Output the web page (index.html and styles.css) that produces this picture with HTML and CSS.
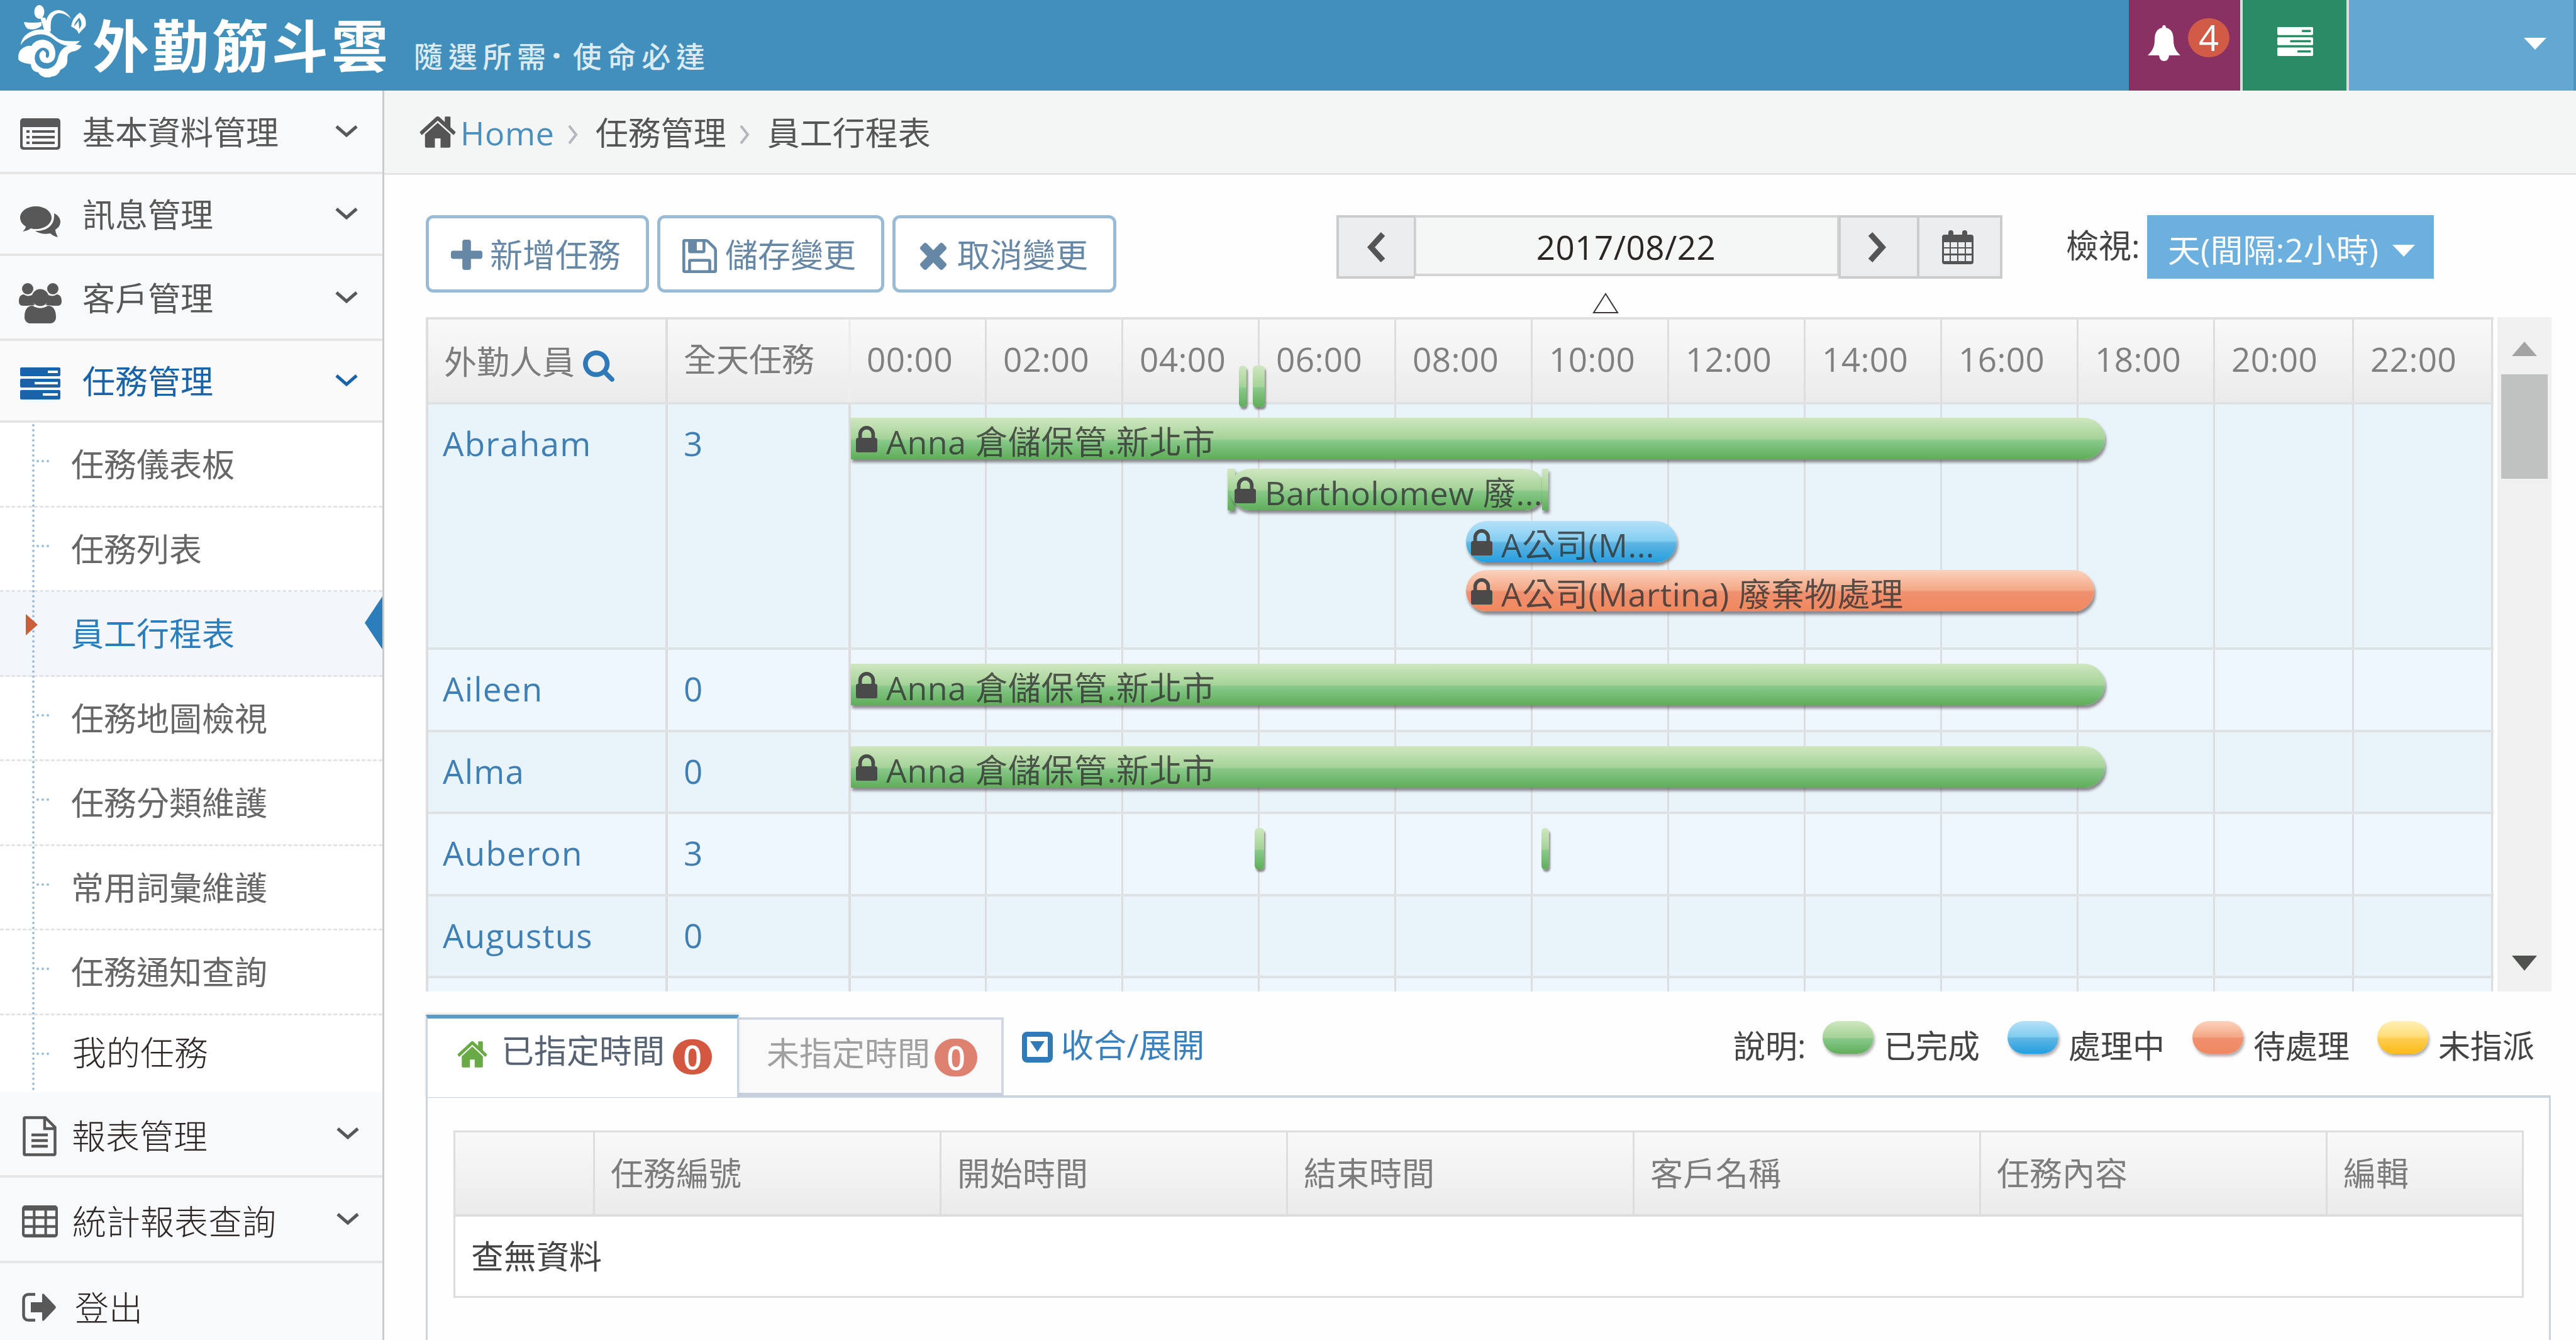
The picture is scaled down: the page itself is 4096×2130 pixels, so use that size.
FILE: index.html
```html
<!DOCTYPE html>
<html lang="zh-Hant">
<head>
<meta charset="utf-8">
<title>外勤筋斗雲 - 員工行程表</title>
<link rel="stylesheet" href="styles.css">
</head>
<body>
<svg class="sprite" width="0" height="0" aria-hidden="true">
  <symbol id="i-home" viewBox="72 250 1648 1290" preserveAspectRatio="none"><path d="M1472 992v480q0 26-19 45t-45 19h-384v-384h-256v384h-384q-26 0-45-19t-19-45v-480q0-1 .5-3t.5-3l575-474 575 474q1 2 1 6zm223-69l-62 74q-8 9-21 11h-3q-13 0-21-7l-692-577-692 577q-12 8-24 7-13-2-21-11l-62-74q-8-10-7-23.5t11-21.5l719-599q32-26 76-26t76 26l244 204v-195q0-14 9-23t23-9h192q14 0 23 9t9 23v408l219 182q10 8 11 21.5t-7 23.5z"/></symbol>
  <symbol id="i-plus" viewBox="192 128 1408 1408" preserveAspectRatio="none"><path d="M1600 736v192q0 40-28 68t-68 28h-416v416q0 40-28 68t-68 28h-192q-40 0-68-28t-28-68v-416h-416q-40 0-68-28t-28-68v-192q0-40 28-68t68-28h416v-416q0-40 28-68t68-28h192q40 0 68 28t28 68v416h416q40 0 68 28t28 68z"/></symbol>
  <symbol id="i-save" viewBox="128 128 1536 1536" preserveAspectRatio="none"><path d="M512 1536h768v-384h-768v384zm896 0h128v-896q0-14-10-38.5t-20-34.5l-281-281q-10-10-34-20t-39-10v416q0 40-28 68t-68 28h-576q-40 0-68-28t-28-68v-416h-128v1280h128v-416q0-40 28-68t68-28h832q40 0 68 28t28 68v416zm-384-928v-320q0-13-9.5-22.5t-22.5-9.5h-192q-13 0-22.5 9.5t-9.5 22.5v320q0 13 9.5 22.5t22.5 9.5h192q13 0 22.5-9.5t9.5-22.5zm640 32v928q0 40-28 68t-68 28h-1344q-40 0-68-28t-28-68v-1344q0-40 28-68t68-28h928q40 0 88 20t76 48l280 280q28 28 48 76t20 88z"/></symbol>
  <symbol id="i-times" viewBox="302 366 1188 1188" preserveAspectRatio="none"><path d="M1490 1322q0 40-28 68l-136 136q-28 28-68 28t-68-28l-294-294-294 294q-28 28-68 28t-68-28l-136-136q-28-28-28-68t28-68l294-294-294-294q-28-28-28-68t28-68l136-136q28-28 68-28t68 28l294 294 294-294q28-28 68-28t68 28l136 136q28 28 28 68t-28 68l-294 294 294 294q28 28 28 68z"/></symbol>
  <symbol id="i-search" viewBox="64 128 1664 1664"><path d="M1216 832q0-185-131.5-316.5t-316.5-131.5-316.5 131.5-131.5 316.5 131.5 316.5 316.5 131.5 316.5-131.5 131.5-316.5zm512 832q0 52-38 90t-90 38q-54 0-90-38l-343-342q-179 124-399 124-143 0-273.5-55.5t-225-150-150-225-55.5-273.5 55.5-273.5 150-225 225-150 273.5-55.5 273.5 55.5 225 150 150 225 55.5 273.5q0 220-124 399l343 343q37 37 37 90z"/></symbol>
  <symbol id="i-lock" viewBox="320 128 1152 1408" preserveAspectRatio="none"><path d="M640 768h512v-192q0-106-75-181t-181-75-181 75-75 181v192zm832 96v576q0 40-28 68t-68 28h-960q-40 0-68-28t-28-68v-576q0-40 28-68t68-28h32v-192q0-184 132-316t316-132 316 132 132 316v192h32q40 0 68 28t28 68z"/></symbol>
  <symbol id="i-down" viewBox="0 0 38 22"><path d="M3 3l16 14 16-14" fill="none" stroke="currentColor" stroke-width="5"/></symbol>
  <symbol id="i-list" viewBox="0 0 64 50"><path fill-rule="evenodd" d="M5 0h54a5 5 0 0 1 5 5v40a5 5 0 0 1-5 5H5a5 5 0 0 1-5-5V5a5 5 0 0 1 5-5zM4 14v29a3 3 0 0 0 3 3h50a3 3 0 0 0 3-3V14zM10 19h5v4h-5zM19 19h36v4H19zM10 28h5v4h-5zM19 28h36v4H19zM10 37h5v4h-5zM19 37h36v4H19z"/></symbol>
  <symbol id="i-comments" viewBox="0 0 64 50"><path d="M25 0c14 0 25 8 25 18S39 36 25 36c-3 0-5 0-8-1-4 3-8 4-13 5 3-3 5-5 5-8C4 29 0 24 0 18 0 8 11 0 25 0z"/><path d="M54 11c6 3 10 8 10 13 0 6-3 10-8 13 0 4 2 8 4 12-5-1-9-3-12-6-9 2-18 0-24-4 17 1 32-8 30-28z"/></symbol>
  <symbol id="i-users" viewBox="0 0 68 64"><circle cx="14" cy="9" r="9"/><circle cx="54" cy="9" r="9"/><path d="M8 18c4 3 8 3 13 1 0 6 2 11 4 16-9 1-15 1-19 1-4 0-6-3-6-7 0-6 2-11 8-11zM60 18c-4 3-8 3-13 1 0 6-2 11-4 16 9 1 15 1 19 1 4 0 6-3 6-7 0-6-2-11-8-11z"/><circle cx="34" cy="23" r="13.500"/><path d="M22 36c8 5 16 5 24 0 9 0 13 7 13 18 0 6-4 10-9 10H18c-5 0-9-4-9-10 0-11 4-18 13-18z"/></symbol>
  <symbol id="i-tasks" viewBox="0 0 64 51" preserveAspectRatio="none"><path fill-rule="evenodd" d="M2 0h60a2 2 0 0 1 2 2v10a2 2 0 0 1-2 2H2a2 2 0 0 1-2-2V2a2 2 0 0 1 2-2zM44 5v4h16V5zM2 18h60a2 2 0 0 1 2 2v10a2 2 0 0 1-2 2H2a2 2 0 0 1-2-2V20a2 2 0 0 1 2-2zM23 23v4h37v-4zM2 36h60a2 2 0 0 1 2 2v11a2 2 0 0 1-2 2H2a2 2 0 0 1-2-2V38a2 2 0 0 1 2-2zM36 41v4h24v-4z"/></symbol>
  <symbol id="i-file" viewBox="0 0 54 64"><path d="M2.500 4a1.500 1.500 0 0 1 1.500-1.500h32L51.500 18v42a1.500 1.500 0 0 1-1.500 1.500H4A1.500 1.500 0 0 1 2.500 60zM35 3v17h16M14 30h26M14 39h26M14 48h26" fill="none" stroke="currentColor" stroke-width="4.500"/></symbol>
  <symbol id="i-table" viewBox="0 0 56 50"><path fill-rule="evenodd" d="M5 0h46a5 5 0 0 1 5 5v40a5 5 0 0 1-5 5H5a5 5 0 0 1-5-5V5a5 5 0 0 1 5-5zM4 8v9h13V8zM21 8v9h14V8zM39 8v9h13V8zM4 21v10h13V21zM21 21v10h14V21zM39 21v10h13V21zM4 35v10h13V35zM21 35v10h14V35zM39 35v10h13V35z"/></symbol>
  <symbol id="i-out" viewBox="0 0 54 46"><path d="M21 2.500H10A7.500 7.500 0 0 0 2.500 10v26a7.500 7.500 0 0 0 7.500 7.500h11" fill="none" stroke="currentColor" stroke-width="4.500"/><path d="M14 15h18V3q0-3 3-1l18 19q1.500 2 0 4L35 44q-3 2-3-1V31H14z"/></symbol>
  <symbol id="i-bell" viewBox="0 0 52 57" preserveAspectRatio="none"><path d="M26 0q3 0 3 4c9 2 12 9 12 20 0 12 5 18 11 24H0c6-6 11-12 11-24C11 13 14 6 23 4q0-4 3-4zM18 48h16q-1 9-8 9t-8-9z"/></symbol>
  <symbol id="i-cal" viewBox="0 0 50 54"><path fill-rule="evenodd" d="M4 7h6V4q0-4 4-4t4 4v3h14V4q0-4 4-4t4 4v3h6q4 0 4 4v39q0 4-4 4H4q-4 0-4-4V11q0-4 4-4zM3 19v8h9v-8zM14 19v8h10v-8zM26 19v8h10v-8zM38 19v8h9v-8zM3 29v8h9v-8zM14 29v8h10v-8zM26 29v8h10v-8zM38 29v8h9v-8zM3 40v9h9v-9zM14 40v9h10v-9zM26 40v9h10v-9zM38 40v9h9v-9z"/></symbol>
  <symbol id="i-prev" viewBox="0 0 32 50"><path d="M26 4L7 25l19 21" fill="none" stroke="currentColor" stroke-width="9"/></symbol>
  <symbol id="i-next" viewBox="0 0 32 50"><path d="M6 4l19 21L6 46" fill="none" stroke="currentColor" stroke-width="9"/></symbol>
  <symbol id="i-crumb" viewBox="0 0 18 34"><path d="M3 3l11 14L3 31" fill="none" stroke="currentColor" stroke-width="4"/></symbol>
  <symbol id="i-toggle" viewBox="0 0 49 49"><path fill-rule="evenodd" d="M8 0h33a8 8 0 0 1 8 8v33a8 8 0 0 1-8 8H8a8 8 0 0 1-8-8V8a8 8 0 0 1 8-8zM8 8v32h33V8zM13 15h23L24.500 32z"/></symbol>
</svg>

<header class="navbar">
  <a class="brand">
    <svg class="brand-mark" viewBox="0 0 112 115">
      <ellipse cx="34.500" cy="11" rx="8" ry="11"/>
      <path d="M36 20h8l8 24 13 10q10 5 34 3-6 8-18 8-12-1-24-11Q42 42 24 49 9 55 5 64 6 50 20 43q10-5 22-4z"/>
      <path d="M10 27q14 2 28 0v6q-10 8-21 5-5-2-7-11z"/>
      <path d="M46 40C42 20 52 8 66 8q12 1 19 14-10-10-20-9Q50 16 53 42z"/>
      <path fill-rule="evenodd" d="M99 12q12 8 9 22l-11 12q0-6-12-12 2-14 14-22zm-1 8q-8 8-8 14l7-9 1 13q7-8 0-18z"/>
      <path d="M1 84q0-14 12-18 4-2 9-1 6-10 18-10 18 2 20 20 1 14-10 17-12 2-15-8-2-8 5-12 6 2 5 7-1 5 3 5 4-4 1-12-8-8-16-1-9 9-4 21 7 11 20 9 12-3 15-16 4-18 19-21 10-3 19 1-5 8-15 9-8 2-8 10 2 14-11 19-3 10-15 11-5 4-12 0-7-3-8-7-11-1-12-13Q0 91 1 84z"/>
    </svg>
    <span class="brand-name">外勤筋斗雲</span>
    <span class="brand-tag"><span>隨選所需</span><b>·</b><span>使命必達</span></span>
  </a>
  <nav class="nav-right">
    <a class="nav-bell"><svg><use href="#i-bell"/></svg><span class="count">4</span></a>
    <a class="nav-tasks"><svg><use href="#i-tasks"/></svg></a>
    <a class="nav-user"><i class="caret"></i></a>
  </nav>
</header>

<div class="container">
  <aside class="sidebar">
    <a class="item h132"><svg class="ic list"><use href="#i-list"/></svg><span>基本資料管理</span><svg class="down"><use href="#i-down"/></svg></a>
    <a class="item h130"><svg class="ic comments"><use href="#i-comments"/></svg><span>訊息管理</span><svg class="down"><use href="#i-down"/></svg></a>
    <a class="item h135"><svg class="ic users"><use href="#i-users"/></svg><span>客戶管理</span><svg class="down"><use href="#i-down"/></svg></a>
    <a class="item h130 open"><svg class="ic tasks"><use href="#i-tasks"/></svg><span>任務管理</span><svg class="down"><use href="#i-down"/></svg></a>
    <div class="submenu">
      <a class="sub">任務儀表板</a>
      <a class="sub">任務列表</a>
      <a class="sub active">員工行程表</a>
      <a class="sub">任務地圖檢視</a>
      <a class="sub">任務分類維護</a>
      <a class="sub">常用詞彙維護</a>
      <a class="sub">任務通知查詢</a>
      <a class="sub mine">我的任務</a>
    </div>
    <a class="item late"><svg class="ic file"><use href="#i-file"/></svg><span>報表管理</span><svg class="down"><use href="#i-down"/></svg></a>
    <a class="item late"><svg class="ic table"><use href="#i-table"/></svg><span>統計報表查詢</span><svg class="down"><use href="#i-down"/></svg></a>
    <a class="item late logout"><svg class="ic out"><use href="#i-out"/></svg><span>登出</span></a>
  </aside>

  <main class="content">
    <div class="breadcrumb">
      <svg class="bhome"><use href="#i-home"/></svg><a>Home</a>
      <svg class="sep"><use href="#i-crumb"/></svg><span>任務管理</span>
      <svg class="sep"><use href="#i-crumb"/></svg><span>員工行程表</span>
    </div>

    <div class="toolbar">
      <button class="btn b1"><svg class="plus"><use href="#i-plus"/></svg>新增任務</button>
      <button class="btn b2"><svg class="save"><use href="#i-save"/></svg>儲存變更</button>
      <button class="btn b3"><svg class="times"><use href="#i-times"/></svg>取消變更</button>
      <div class="datebox">
        <button class="dbtn prev"><svg><use href="#i-prev"/></svg></button>
        <div class="date">2017/08/22</div>
        <button class="dbtn next"><svg><use href="#i-next"/></svg></button>
        <button class="dbtn cal"><svg><use href="#i-cal"/></svg></button>
        <svg class="pointer" viewBox="0 0 42 34"><path d="M21 2L40 32H2z" fill="#fff" stroke="#3a3534" stroke-width="2"/></svg>
      </div>
      <span class="view-label">檢視:</span>
      <button class="view">天(間隔:2小時)<i class="caret"></i></button>
    </div>

    <div class="schedule">
      <div class="grid">
        <div class="row head">
          <div class="c-name">外勤人員<svg class="search"><use href="#i-search"/></svg></div>
          <div class="c-all">全天任務</div>
          <div class="lane"><i>00:00</i><i>02:00</i><i>04:00</i><i>06:00</i><i>08:00</i><i>10:00</i><i>12:00</i><i>14:00</i><i>16:00</i><i>18:00</i><i>20:00</i><i>22:00</i>
            <b class="bar green tick" style="left:618px;top:73px;width:12px"></b>
            <b class="bar green tick" style="left:640px;top:73px;width:19px"></b>
          </div>
        </div>
        <div class="row tall">
          <div class="c-name">Abraham</div><div class="c-all">3</div>
          <div class="lane"><i></i><i></i><i></i><i></i><i></i><i></i><i></i><i></i><i></i><i></i><i></i><i></i>
            <b class="bar green from-start" style="left:1px;top:21px;width:1994px"><svg><use href="#i-lock"/></svg>Anna 倉儲保管.新北市</b>
            <b class="bar green edge" style="left:600px;top:102px;width:12px"></b>
            <b class="bar green" style="left:603px;top:102px;width:502px"><svg><use href="#i-lock"/></svg>Bartholomew 廢...</b>
            <b class="bar green edge" style="left:1100px;top:102px;width:10px"></b>
            <b class="bar blue" style="left:979px;top:185px;width:335px"><svg><use href="#i-lock"/></svg>A公司(M...</b>
            <b class="bar orange" style="left:979px;top:263px;width:999px"><svg><use href="#i-lock"/></svg>A公司(Martina) 廢棄物處理</b>
          </div>
        </div>
        <div class="row alt">
          <div class="c-name">Aileen</div><div class="c-all">0</div>
          <div class="lane"><i></i><i></i><i></i><i></i><i></i><i></i><i></i><i></i><i></i><i></i><i></i><i></i>
            <b class="bar green from-start" style="left:1px;top:22px;width:1994px"><svg><use href="#i-lock"/></svg>Anna 倉儲保管.新北市</b>
          </div>
        </div>
        <div class="row">
          <div class="c-name">Alma</div><div class="c-all">0</div>
          <div class="lane"><i></i><i></i><i></i><i></i><i></i><i></i><i></i><i></i><i></i><i></i><i></i><i></i>
            <b class="bar green from-start" style="left:1px;top:22px;width:1994px"><svg><use href="#i-lock"/></svg>Anna 倉儲保管.新北市</b>
          </div>
        </div>
        <div class="row alt">
          <div class="c-name">Auberon</div><div class="c-all">3</div>
          <div class="lane"><i></i><i></i><i></i><i></i><i></i><i></i><i></i><i></i><i></i><i></i><i></i><i></i>
            <b class="bar green tick" style="left:643px;top:22px;width:15px"></b>
            <b class="bar green tick" style="left:1099px;top:22px;width:12px"></b>
          </div>
        </div>
        <div class="row">
          <div class="c-name">Augustus</div><div class="c-all">0</div>
          <div class="lane"><i></i><i></i><i></i><i></i><i></i><i></i><i></i><i></i><i></i><i></i><i></i><i></i></div>
        </div>
        <div class="row alt last">
          <div class="c-name"></div><div class="c-all"></div>
          <div class="lane"><i></i><i></i><i></i><i></i><i></i><i></i><i></i><i></i><i></i><i></i><i></i><i></i></div>
        </div>
      </div>
      <div class="scroll"><span class="up"></span><span class="thumb"></span><span class="dn"></span></div>
    </div>

    <div class="tabs">
      <a class="tab on"><svg><use href="#i-home"/></svg>已指定時間<span class="badge">0</span></a>
      <a class="tab off">未指定時間<span class="badge">0</span></a>
      <a class="toggle"><svg><use href="#i-toggle"/></svg>收合/展開</a>
      <div class="legend">
        <span class="lab">說明:</span>
        <b class="pill green"></b><span class="w">已完成</span>
        <b class="pill blue"></b><span class="w">處理中</span>
        <b class="pill orange"></b><span class="w">待處理</span>
        <b class="pill yellow"></b><span class="w">未指派</span>
      </div>
    </div>

    <section class="panel">
      <div class="tbl">
        <div class="thead"><span></span><span>任務編號</span><span>開始時間</span><span>結束時間</span><span>客戶名稱</span><span>任務內容</span><span>編輯</span></div>
        <div class="empty">查無資料</div>
      </div>
    </section>
  </main>
</div>
</body>
</html>
```
FILE: styles.css
```css
* { box-sizing: border-box; margin: 0; padding: 0; }
html, body { width: 4096px; height: 2130px; overflow: hidden; }
body {
  font: 400 52px/70px "Open Sans", "Noto Sans CJK TC", sans-serif;
  color: #666;
  background: #fefefe;
  display: flex;
  flex-direction: column;
}
svg { fill: currentColor; flex: none; display: block; }
.sprite { position: absolute; }
button { font: inherit; color: inherit; background: none; border: 0; }
i, b { font-style: normal; font-weight: 400; }
.caret { border: 18px solid transparent; border-top: 19px solid #fff; border-bottom: 0; }

/* top bar */
.navbar { height: 144px; flex: none; background: #408fbc; display: flex; justify-content: space-between; color: #fff; }
.brand { display: flex; padding-left: 28px; }
.brand-mark { width: 112px; height: 115px; margin-top: 8px; }
.brand-name { font: 700 90px/90px "Noto Sans CJK TC", sans-serif; letter-spacing: 5px; margin: 23px 0 0 7px; white-space: nowrap; }
.brand-tag { font: 500 46px/60px "Noto Sans CJK TC", sans-serif; letter-spacing: 8.700px; margin: 57px 0 0 36px; display: flex; opacity: .82; }
.brand-tag b { font-family: "Open Sans", sans-serif; font-weight: 800; width: 16px; letter-spacing: 0; text-align: center; margin-right: 18px; }
.nav-right { display: flex; }
.nav-bell { width: 181px; background: #8a3163; border-right: 4px solid #ddd; display: flex; padding-left: 30px; }
.nav-bell svg { width: 52px; height: 57px; margin-top: 40px; }
.count { width: 66px; height: 62px; border-radius: 50%; background: #d15b47; margin: 29px 0 0 12px; font-size: 56px; line-height: 60px; text-align: center; }
.nav-tasks { width: 169px; background: #2a8b64; border-right: 4px solid #ddd; padding: 43px 0 0 55px; }
.nav-tasks svg { width: 57px; height: 46px; }
.nav-user { width: 361px; background: #62a8d2; border-right: 4px solid #4b93c0; display: flex; justify-content: flex-end; padding: 60px 43px 0 0; }

.container { display: flex; flex: 1; min-height: 0; }

/* sidebar */
.sidebar { width: 611px; flex: none; border-right: 3px solid #ccc; background: #fff; }
.item { display: flex; align-items: center; background: #f8f9fa; border-bottom: 4px solid #e5e5e5; padding-left: 32px; color: #585858; position: relative; }
.item span { flex: 1; padding-top: 2px; }
.h132 { height: 133px; } .h130 { height: 130px; } .h135 { height: 135px; }
.ic { margin-right: 35px; }
.list { width: 64px; height: 50px; margin-top: 8px; }
.comments { width: 64px; height: 50px; margin-top: 26px; }
.users { width: 68px; height: 64px; margin: 18px 33px 0 -2px; }
.tasks { width: 64px; height: 51px; margin-top: 9px; }
.down { width: 38px; height: 22px; margin-right: 38px; }
.open { background: #fafafa; color: #1963aa; height: 130px; }
.submenu { position: relative; height: 1064px; }
.submenu::before { content: ""; position: absolute; left: 51px; top: 2px; bottom: 2px; border-left: 4px dotted #9dbdd6; z-index: 1; }
.sub { display: block; position: relative; height: 134.500px; line-height: 131px; padding-left: 113px; border-bottom: 3px dashed #e4e4e4; color: #666; }
.sub::before { content: ""; position: absolute; left: 58px; top: 59px; width: 20px; border-top: 4px dotted #9dbdd6; }
.sub.active { background: #f3f7fb; color: #2b7dbc; }
.sub.active::before { left: 41px; top: 35px; width: 0; border: 17px solid transparent; border-left: 19px solid #c86139; border-right: 0; z-index: 2; }
.sub.active::after { content: ""; position: absolute; right: 0; top: 7px; border: 42px solid transparent; border-right: 28px solid #2b7dbc; border-left: 0; }
.sub.mine { border: 0; height: 122px; line-height: 118px; padding-left: 115px; font-size: 54px; font-weight: 300; color: #2e2726; }
.late { height: 136px; padding-left: 35px; }
.late span { font-size: 54px; font-weight: 300; color: #2e2726; padding-top: 8px; }
.late .ic { margin-right: 23px; }
.late .down { margin-right: 36px; }
.file { width: 56px; height: 64px; margin-top: 8px; }
.table { width: 57px; height: 51px; margin-top: 6px; }
.logout { border: 0; }
.out { width: 54px; height: 46px; margin-top: 3px; }
.logout span { padding-top: 5px; }
.late .out { margin-right: 30px; }

/* content */
.content { flex: 1; min-width: 0; display: flex; flex-direction: column; }
.breadcrumb { height: 134px; flex: none; background: #f4f6f5; border-bottom: 3px solid #e5e5e5; padding-left: 56px; display: flex; align-items: center; color: #555; }
.breadcrumb a, .breadcrumb span { padding-top: 2px; }
.bhome { width: 58px; height: 50px; margin-right: 7px; }
.breadcrumb a { color: #4c8fbd; letter-spacing: .700px; }
.breadcrumb .sep { width: 18px; height: 34px; margin: 8px 27px 0 20px; color: #b2b6bf; }

.toolbar { height: 226px; flex: none; padding: 64px 0 0 66px; display: flex; align-items: flex-start; }
.btn { height: 123px; border: 5px solid #9abbd6; border-radius: 12px; color: #6688a6; display: flex; align-items: center; background: #fff; margin-right: 13px; padding-top: 2px; white-space: nowrap; }
.b1 { width: 355px; padding-left: 35px; }
.b2 { width: 361px; padding-left: 35px; }
.b3 { width: 356px; padding-left: 39px; }
.plus { width: 50px; height: 48px; margin-right: 12px; }
.save { width: 55px; height: 54px; margin: 4px 13px 0 0; }
.times { width: 42px; height: 43px; margin: 6px 17px 0 0; }
.datebox { display: flex; position: relative; margin-left: 337px; }
.dbtn { height: 101px; background: #ebedee; border: 4px solid #ccc; display: flex; align-items: center; justify-content: center; color: #555; }
.prev { width: 125px; border-right-width: 2px; }
.prev svg, .next svg { width: 32px; height: 50px; }
.next svg { margin-right: 8px; }
.date { width: 673px; height: 97px; background: #f5f7f6; border: 4px solid #d5d5d5; border-width: 4px 2px; text-align: center; color: #2b2524; line-height: 93px; font-size: 53px; letter-spacing: .400px; padding-right: 2px; }
.next { width: 125px; border-right: 0; }
.cal { width: 136px; }
.cal svg { width: 50px; height: 54px; margin-right: 6px; }
.pointer { position: absolute; left: 407px; top: 123px; width: 42px; height: 34px; }
.view-label { margin: 13px 0 0 101px; width: 129px; white-space: nowrap; color: #444; }
.view { width: 456px; height: 101px; background: #6cb0e0; color: #fff; display: flex; align-items: center; padding: 8px 0 0 33px; white-space: nowrap; font-size: 51.500px; letter-spacing: .500px; }
.view .caret { margin: 4px 0 0 22px; }

/* schedule */
.schedule { height: 1072px; flex: none; margin-left: 66px; display: flex; }
.grid { width: 3288px; border-left: 4px solid #ddd; overflow: hidden; }
.row { height: 130.500px; display: flex; background: #e8f4fa; border-bottom: 4px solid #dfe2e2; position: relative; }
.row.alt { background: #eff7fe; }
.row.head { height: 139px; background: linear-gradient(#f9f9f9, #ebebeb); border-top: 4px solid #dfe1e0; color: #808080; z-index: 1; }
.row.tall { height: 390px; }
.row.last { height: 30px; border: 0; }
.c-name { width: 381px; border-right: 4px solid #ddd; padding: 27px 0 0 23px; color: #3f7fb3; font-size: 53px; display: flex; letter-spacing: 1.200px; }
.c-all { width: 291px; border-right: 4px solid #ddd; padding: 27px 0 0 25px; color: #3f7fb3; font-size: 53px; }
.head .c-name, .head .c-all { color: #7c7c7c; font-size: 52px; letter-spacing: 0; }
.head .c-name { padding: 32px 0 0 25px; }
.head .c-all { padding-top: 28px; border-color: #eee; }
.search { width: 50px; height: 50px; margin: 17px 0 0 13px; color: #3079b8; }
.lane { position: relative; display: flex; margin-left: -1px; }
.lane i { width: 217px; border-right: 3px solid #ddd; padding: 27px 0 0 26px; }
.lane i:nth-of-type(n+11) { width: 221px; }
.head .lane i { padding-top: 28px; font-size: 53px; letter-spacing: .400px; }

.green { background: linear-gradient(#d0e7c0, #a3d296 52%, #8aca8c 53%, #5fad5a); }
.blue { background: linear-gradient(#b7e1f8, #82cdf2 48%, #5fb5e2 53%, #249fdf); }
.orange { background: linear-gradient(#fbd2bd, #f4a988 48%, #f0906f 53%, #f0885e); }
.yellow { background: linear-gradient(#fff0b8, #ffdd76 48%, #fdce50 53%, #fbba17); }
.bar { position: absolute; height: 66px; border-radius: 33px; box-shadow: 2px 5px 4px rgba(60, 50, 50, .55); color: rgba(50, 50, 50, .8); display: flex; align-items: center; white-space: nowrap; padding: 10px 0 0 8px; letter-spacing: .500px; }
.bar svg { width: 34px; height: 42px; margin: -8px 14px 0 0; color: #4a4a4a; }
.from-start { border-radius: 0 33px 33px 0; }
.tick { border-radius: 6px; padding: 0; box-shadow: 2px 4px 3px rgba(60, 50, 50, .55); }
.edge { border-radius: 0; padding: 0; }

.scroll { width: 86px; margin-left: 6px; background: #f0f0f0; display: flex; flex-direction: column; align-items: center; padding-top: 39px; }
.up { border: 20px solid transparent; border-bottom: 23px solid #a3a3a3; border-top: 0; }
.thumb { width: 74px; height: 166px; background: #c0c1c1; margin-top: 29px; }
.dn { border: 20px solid transparent; border-top: 24px solid #505250; border-bottom: 0; margin-top: 758px; }

/* tabs */
.tabs { height: 165px; flex: none; margin-left: 66px; display: flex; padding-top: 37px; position: relative; white-space: nowrap; }
.tab { display: flex; position: relative; }
.tab.on { width: 498px; height: 131px; background: #fff; border: 3px solid #c5d5e4; border-top: 6px solid #5b9cc6; border-bottom: 0; padding: 16px 0 0 47px; color: #576373; z-index: 1; box-shadow: 0 -2px 4px rgba(0, 0, 0, .12); }
.tab.on svg { width: 48px; height: 42px; margin: 20px 22px 0 0; color: #69aa46; }
.badge { width: 62px; height: 56px; border-radius: 31px; background: #d4573f; color: #fff; font-weight: 600; line-height: 55px; text-align: center; margin: 17px 0 0 13px; }
.tab.off { width: 421px; height: 126px; margin-top: 4px; background: #f9f9f9; border: 4px solid #cfd9e3; border-left: 0; border-bottom: 6px solid #c5d0dc; padding: 18px 0 0 44px; color: #a0a0a0; }
.tab.off .badge { background: #de8171; width: 68px; height: 60px; margin: 12px 0 0 7px; line-height: 59px; }
.toggle { display: flex; padding: 13px 0 0 29px; color: #3a80bd; letter-spacing: .300px; }
.toggle svg { width: 49px; height: 49px; margin: 14px 13px 0 0; color: #2f7bba; }
.legend { position: absolute; left: 2079px; top: 46px; display: flex; color: #444; font-size: 51px; }
.legend .lab { width: 142px; padding-top: 5px; }
.legend .w { width: 197px; padding-top: 5px; }
.pill { width: 81px; height: 52px; border-radius: 26px; margin: 1px 16px 0 0; box-shadow: 2px 4px 4px rgba(60, 50, 50, .4); }

.panel { flex: 1; margin: 0 40px 0 66px; border: 3px solid #c9d6e2; border-top-width: 4px; border-bottom: 0; padding: 52px 0 0 41px; min-height: 0; }
.tbl { width: 3292px; border: 3px solid #ddd; height: 266px; background: #fff; }
.thead { height: 134px; display: grid; grid-template-columns: 222px 551px 551px 551px 551px 551px 1fr; background: linear-gradient(#f9f9f9, #ebebeb); border-bottom: 4px solid #ddd; color: #7c7c7c; }
.thead span { border-right: 3px solid #ddd; padding: 30px 0 0 25px; }
.thead span:last-child { border: 0; }
.empty { padding: 28px 0 0 25px; color: #444; }
```
